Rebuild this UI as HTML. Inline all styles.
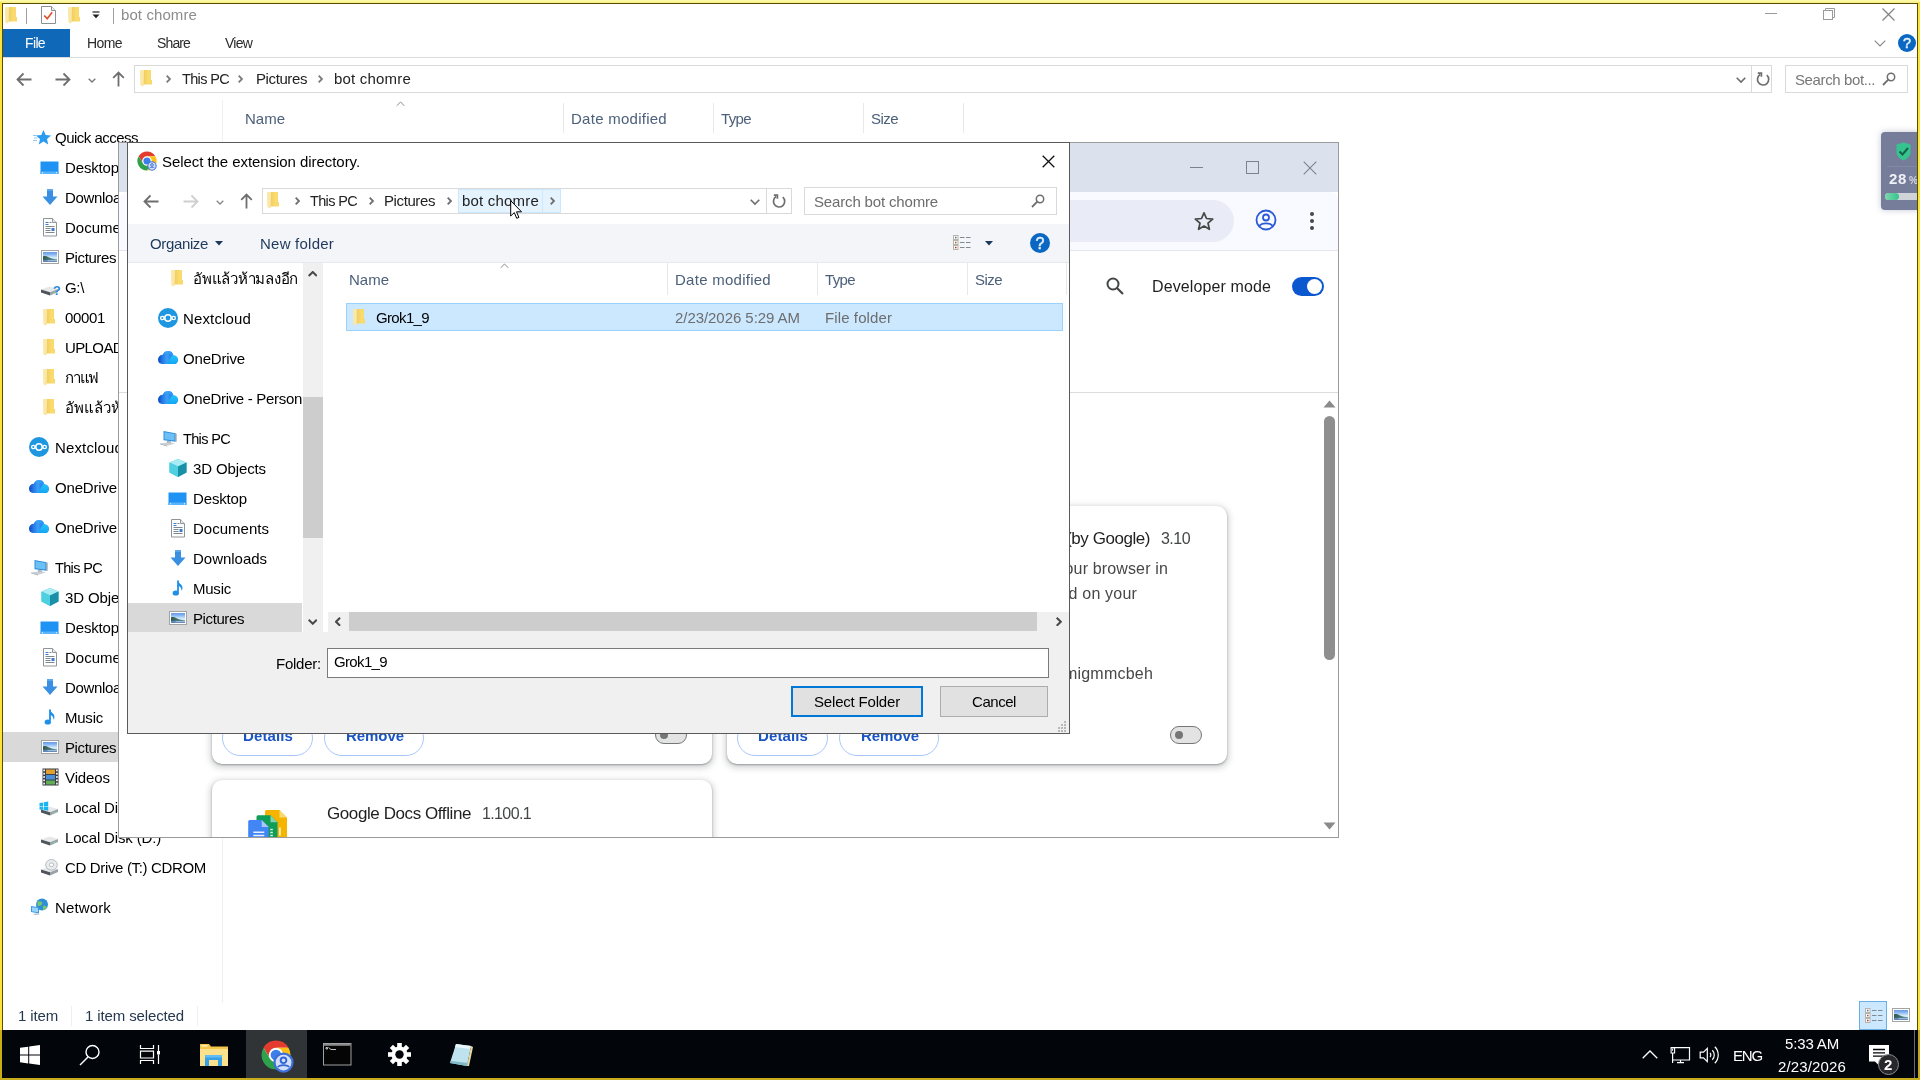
<!DOCTYPE html><html lang="en"><head><meta charset="utf-8"><title>bot chomre</title><style>html,body{margin:0;padding:0}body{width:1920px;height:1080px;position:relative;overflow:hidden;background:#fff;font-family:'Liberation Sans','DejaVu Sans',sans-serif;}.layer{position:absolute;left:0;top:0;width:1920px;height:1080px;overflow:hidden;will-change:transform}.b{position:absolute;display:block}.t{position:absolute;white-space:pre;display:block}</style></head><body><div class="layer" style="background:#fff"><svg class="b" style="left:4.5px;top:7px;" width="12.5" height="17.0" viewBox="0 0 12.500 17"><defs><linearGradient id="fg" x1="0" x2="1"><stop offset="0" stop-color="#efcf62"/><stop offset=".6" stop-color="#fbdb6e"/><stop offset="1" stop-color="#f7d870"/></linearGradient></defs><path d="M3.600 0H11v10h1v4.600H3.600z" fill="url(#fg)"/><path d="M0 .300L3.700 .100V14.500L2.700 16.600 .300 15.300z" fill="#fbe8a6"/><path d="M3.700 .100V14.500L2.700 16.600z" fill="#f3dc92"/></svg><div class="b" style="left:26px;top:8px;width:1px;height:16px;background:#a0a0a0"></div><svg class="b" style="left:41px;top:6px;" width="15" height="18" viewBox="0 0 15 18"><path d="M.5.5h10l4 4v13H.5z" fill="#fff" stroke="#8a8f94"/><path d="M10.500.5v4h4" fill="#f0f0f0" stroke="#8a8f94"/><path d="M3.200 9.500l3 3.200 5-6.500" fill="none" stroke="#e0532f" stroke-width="1.700"/></svg><svg class="b" style="left:68.0px;top:7px;" width="12.5" height="17.0" viewBox="0 0 12.500 17"><defs><linearGradient id="fg" x1="0" x2="1"><stop offset="0" stop-color="#efcf62"/><stop offset=".6" stop-color="#fbdb6e"/><stop offset="1" stop-color="#f7d870"/></linearGradient></defs><path d="M3.600 0H11v10h1v4.600H3.600z" fill="url(#fg)"/><path d="M0 .300L3.700 .100V14.500L2.700 16.600 .300 15.300z" fill="#fbe8a6"/><path d="M3.700 .100V14.500L2.700 16.600z" fill="#f3dc92"/></svg><svg class="b" style="left:92px;top:11px;" width="8" height="8" viewBox="0 0 8 8"><path d="M.5 1h7" stroke="#222" stroke-width="1.200"/><path d="M.5 3.500h7l-3.500 3.700z" fill="#222"/></svg><div class="b" style="left:113px;top:8px;width:1px;height:16px;background:#a0a0a0"></div><span class="t" style="left:121px;top:4.30px;font-size:15px;line-height:21px;color:#8c8c8c;letter-spacing:0.095px;">bot chomre</span><div class="b" style="left:1765px;top:13px;width:12px;height:1px;background:#9a9a9a"></div><svg class="b" style="left:1823px;top:8px;" width="12" height="12" viewBox="0 0 12 12"><path d="M2.500 2.500V.5h9v9h-2" fill="none" stroke="#9a9a9a"/><rect x=".5" y="2.500" width="9" height="9" fill="#fff" stroke="#9a9a9a"/></svg><svg class="b" style="left:1882px;top:7.5px;" width="13" height="13" viewBox="0 0 13 13"><path d="M.5.5l12 12M12.500.5l-12 12" stroke="#858585" stroke-width="1.300"/></svg><div class="b" style="left:3px;top:29px;width:67px;height:28px;background:#1068b8"></div><span class="t" style="left:25px;top:33.15px;font-size:14px;line-height:20px;color:#fff;letter-spacing:-0.641px;">File</span><span class="t" style="left:87px;top:33.15px;font-size:14px;line-height:20px;color:#2b2b2b;letter-spacing:-0.590px;">Home</span><span class="t" style="left:157px;top:33.15px;font-size:14px;line-height:20px;color:#2b2b2b;letter-spacing:-0.872px;">Share</span><span class="t" style="left:225px;top:33.15px;font-size:14px;line-height:20px;color:#2b2b2b;letter-spacing:-0.773px;">View</span><div class="b" style="left:0px;top:57px;width:1920px;height:1px;background:#dadbdc"></div><svg class="b" style="left:1874.0px;top:39.5px;" width="12" height="7.5" viewBox="0 0 12 7.5"><path d="M.7 .7L6.0 6.0L11.3 .7" fill="none" stroke="#8a8a8a" stroke-width="1.2"/></svg><svg class="b" style="left:1898px;top:34px;" width="18" height="18" viewBox="0 0 18 18"><circle cx="9" cy="9" r="9" fill="#0a67c2"/><text x="9" y="14.0" text-anchor="middle" font-family="Liberation Sans" font-size="14.4" fill="#e8f4ff" stroke="#e8f4ff" stroke-width=".5">?</text></svg><svg class="b" style="left:16px;top:71.5px;" width="17" height="15" viewBox="0 0 17 15"><path d="M7.500 1.500L1.500 7.500l6 6M1.500 7.500h14" fill="none" stroke="#6e6e6e" stroke-width="1.800"/></svg><svg class="b" style="left:53.5px;top:71.5px;" width="17" height="15" viewBox="0 0 17 15"><path d="M9.500 1.500l6 6-6 6M15.500 7.500h-14" fill="none" stroke="#6e6e6e" stroke-width="1.800"/></svg><svg class="b" style="left:88.0px;top:77.5px;" width="8" height="5.5" viewBox="0 0 8 5.5"><path d="M.7 .7L4.0 4.0L7.3 .7" fill="none" stroke="#7a7a7a" stroke-width="1.4"/></svg><svg class="b" style="left:111.5px;top:71px;" width="13" height="16" viewBox="0 0 13 16"><path d="M1.200 6.800L6.500 1.500l5.300 5.300M6.500 1.500v14" fill="none" stroke="#6e6e6e" stroke-width="1.800"/></svg><div class="b" style="left:134px;top:65px;width:1638px;height:28px;border:1px solid #d9d9d9;box-sizing:border-box"></div><div class="b" style="left:1751px;top:65px;width:1px;height:28px;background:#d9d9d9"></div><svg class="b" style="left:140.0px;top:70px;" width="12.5" height="17.0" viewBox="0 0 12.500 17"><defs><linearGradient id="fg" x1="0" x2="1"><stop offset="0" stop-color="#efcf62"/><stop offset=".6" stop-color="#fbdb6e"/><stop offset="1" stop-color="#f7d870"/></linearGradient></defs><path d="M3.600 0H11v10h1v4.600H3.600z" fill="url(#fg)"/><path d="M0 .300L3.700 .100V14.500L2.700 16.600 .300 15.300z" fill="#fbe8a6"/><path d="M3.700 .100V14.500L2.700 16.600z" fill="#f3dc92"/></svg><svg class="b" style="left:165.5px;top:75.0px;" width="5.5" height="8" viewBox="0 0 5.5 8"><path d="M.7 .7L4.0 4.0L.7 7.3" fill="none" stroke="#7a7a7a" stroke-width="1.8"/></svg><span class="t" style="left:182px;top:68.98px;font-size:14.5px;line-height:20px;color:#222;letter-spacing:-0.654px;">This PC</span><svg class="b" style="left:237.5px;top:75.0px;" width="5.5" height="8" viewBox="0 0 5.5 8"><path d="M.7 .7L4.0 4.0L.7 7.3" fill="none" stroke="#7a7a7a" stroke-width="1.8"/></svg><span class="t" style="left:256px;top:68.30px;font-size:15px;line-height:21px;color:#222;letter-spacing:-0.398px;">Pictures</span><svg class="b" style="left:317.5px;top:75.0px;" width="5.5" height="8" viewBox="0 0 5.5 8"><path d="M.7 .7L4.0 4.0L.7 7.3" fill="none" stroke="#7a7a7a" stroke-width="1.8"/></svg><span class="t" style="left:334px;top:68.30px;font-size:15px;line-height:21px;color:#222;letter-spacing:0.195px;">bot chomre</span><svg class="b" style="left:1736.0px;top:77.0px;" width="10" height="6.5" viewBox="0 0 10 6.5"><path d="M.7 .7L5.0 5.0L9.3 .7" fill="none" stroke="#6e6e6e" stroke-width="1.6"/></svg><svg class="b" style="left:1756px;top:71.5px;" width="14" height="15" viewBox="0 0 14 15"><path d="M10.800 3.200A5.600 5.600 0 1 1 4.200 2.600" fill="none" stroke="#6e6e6e" stroke-width="1.700"/><path d="M1.800 1.200h3.600v3.600" fill="none" stroke="#6e6e6e" stroke-width="1.700"/></svg><div class="b" style="left:1785px;top:65px;width:123px;height:28px;border:1px solid #d9d9d9;box-sizing:border-box"></div><span class="t" style="left:1795px;top:69.30px;font-size:15px;line-height:21px;color:#777;letter-spacing:-0.389px;">Search bot...</span><svg class="b" style="left:1882px;top:72px;" width="14" height="14" viewBox="0 0 14 14"><circle cx="9" cy="5" r="3.700" fill="none" stroke="#6e6e6e" stroke-width="1.500"/><path d="M6.300 7.700L1 13" stroke="#6e6e6e" stroke-width="1.800"/></svg><svg class="b" style="left:395.5px;top:101.25px;" width="9" height="6.0" viewBox="0 0 9 6.0"><path d="M.7 4.8L4.5 1L8.3 4.8" fill="none" stroke="#8a8a8a" stroke-width="1"/></svg><span class="t" style="left:245px;top:108.30px;font-size:15px;line-height:21px;color:#4c607a;">Name</span><span class="t" style="left:571px;top:108.30px;font-size:15px;line-height:21px;color:#4c607a;letter-spacing:0.264px;">Date modified</span><span class="t" style="left:721px;top:108.30px;font-size:15px;line-height:21px;color:#4c607a;letter-spacing:-0.633px;">Type</span><span class="t" style="left:871px;top:108.30px;font-size:15px;line-height:21px;color:#4c607a;letter-spacing:-0.547px;">Size</span><div class="b" style="left:563px;top:103px;width:1px;height:30px;background:#e8e8e8"></div><div class="b" style="left:713px;top:103px;width:1px;height:30px;background:#e8e8e8"></div><div class="b" style="left:863px;top:103px;width:1px;height:30px;background:#e8e8e8"></div><div class="b" style="left:963px;top:103px;width:1px;height:30px;background:#e8e8e8"></div><div class="b" style="left:222px;top:100px;width:1px;height:903px;background:#f0f0f0"></div><svg class="b" style="left:33px;top:130px;" width="18" height="15" viewBox="0 0 18 15"><path d="M10.500 0l2.200 5 5.300.5-4 3.600 1.200 5.300-4.700-2.800-4.700 2.800L7 9.100 3 5.500 8.300 5z" fill="#2b9bf0"/><path d="M0 5.500h4M1 8h3.500M0 10.500h4" stroke="#8cc8f7" stroke-width="1"/></svg><span class="t" style="left:55px;top:127.30px;font-size:15px;line-height:21px;color:#000;letter-spacing:-0.517px;">Quick access</span><svg class="b" style="left:40px;top:161px;" width="19" height="14" viewBox="0 0 19 14"><rect x="0.5" y="0.5" width="18" height="12.5" fill="#1f93f3"/><rect x="0.5" y="10.5" width="18" height="2.5" fill="#58b4fb"/><rect x="2" y="11.3" width="1" height="1" fill="#fff"/><rect x="16" y="11.3" width="1" height="1" fill="#fff"/></svg><span class="t" style="left:65px;top:157.30px;font-size:15px;line-height:21px;color:#000;letter-spacing:-0.147px;">Desktop</span><svg class="b" style="left:42px;top:189px;" width="16" height="16" viewBox="0 0 16 16"><path d="M5 0h6v7.5h4.5L8 16 .5 7.5H5z" fill="#3b8fe3"/><path d="M5 0h6v2H5z" fill="#5aa7ee"/></svg><span class="t" style="left:65px;top:187.30px;font-size:15px;line-height:21px;color:#000;letter-spacing:-0.358px;">Downloads</span><svg class="b" style="left:43px;top:218px;" width="14" height="19" viewBox="0 0 14 19"><path d="M.5.5h9l4 4v13.5H.5z" fill="#fff" stroke="#8f9499"/><path d="M9.5.5v4h4" fill="#e8eaec" stroke="#8f9499"/><path d="M2.5 4.5h3M2.5 6.5h3" stroke="#3a7bd0"/><path d="M6.5 4.5h2" stroke="#7d8790"/><path d="M2.5 8.5h9M2.5 10.5h5M2.5 12.5h5M2.5 14.5h9" stroke="#7d8790"/><rect x="8.5" y="10" width="3" height="3" fill="#3a7bd0"/></svg><span class="t" style="left:65px;top:217.30px;font-size:15px;line-height:21px;color:#000;letter-spacing:0.014px;">Documents</span><svg class="b" style="left:41px;top:250px;" width="18" height="14" viewBox="0 0 18 14"><defs><linearGradient id="psk" x1="0" x2="0" y1="0" y2="1"><stop offset="0" stop-color="#6a9ae0"/><stop offset=".2" stop-color="#7fb0f2"/><stop offset=".55" stop-color="#d2e9f8"/><stop offset="1" stop-color="#cfe6f5"/></linearGradient><linearGradient id="phl" x1="0" x2="1" y1="0" y2="0"><stop offset="0" stop-color="#2f5a4c"/><stop offset=".5" stop-color="#47776e"/><stop offset="1" stop-color="#6f9aa0"/></linearGradient></defs><rect x=".5" y=".5" width="17" height="13" fill="#fff" stroke="#a3a3a3"/><rect x="2" y="2" width="14" height="10" fill="url(#psk)"/><path d="M2 6.300c2-.6 3.500-.6 5 .6 2 1.500 5 1.400 9 2.600V10.500H2z" fill="url(#phl)"/><path d="M2 9.800h14V12H2z" fill="#5f86b8"/><path d="M6.500 10.300h9.500v.8H6.500z" fill="#cfe2f2" opacity=".8"/></svg><span class="t" style="left:65px;top:247.30px;font-size:15px;line-height:21px;color:#000;letter-spacing:-0.398px;">Pictures</span><svg class="b" style="left:40px;top:284px;overflow:visible;" width="19" height="12" viewBox="0 0 19 12"><path d="M1 5.500L9.500 2.500 18 5 10 8.300z" fill="#e6e8ea"/><path d="M1 5.500L10 8.300V11.500L1 8.500z" fill="#4f555b"/><path d="M10 8.300L18 5V8L10 11.500z" fill="#9aa1a8"/><path d="M12.500 8.900l3-1.200v.9l-3 1.200z" fill="#6fe08a"/></svg><span class="t" style="left:53px;top:281.50px;font-size:13px;line-height:18px;color:#2b8ae0;font-weight:700;">?</span><span class="t" style="left:65px;top:277.30px;font-size:15px;line-height:21px;color:#000;letter-spacing:-0.339px;">G:\</span><svg class="b" style="left:43.0px;top:309px;" width="12.5" height="17.0" viewBox="0 0 12.500 17"><defs><linearGradient id="fg" x1="0" x2="1"><stop offset="0" stop-color="#efcf62"/><stop offset=".6" stop-color="#fbdb6e"/><stop offset="1" stop-color="#f7d870"/></linearGradient></defs><path d="M3.600 0H11v10h1v4.600H3.600z" fill="url(#fg)"/><path d="M0 .300L3.700 .100V14.500L2.700 16.600 .300 15.300z" fill="#fbe8a6"/><path d="M3.700 .100V14.500L2.700 16.600z" fill="#f3dc92"/></svg><span class="t" style="left:65px;top:307.30px;font-size:15px;line-height:21px;color:#000;letter-spacing:-0.344px;">00001</span><svg class="b" style="left:43.0px;top:339px;" width="12.5" height="17.0" viewBox="0 0 12.500 17"><defs><linearGradient id="fg" x1="0" x2="1"><stop offset="0" stop-color="#efcf62"/><stop offset=".6" stop-color="#fbdb6e"/><stop offset="1" stop-color="#f7d870"/></linearGradient></defs><path d="M3.600 0H11v10h1v4.600H3.600z" fill="url(#fg)"/><path d="M0 .300L3.700 .100V14.500L2.700 16.600 .300 15.300z" fill="#fbe8a6"/><path d="M3.700 .100V14.500L2.700 16.600z" fill="#f3dc92"/></svg><span class="t" style="left:65px;top:337.30px;font-size:15px;line-height:21px;color:#000;letter-spacing:-0.615px;">UPLOAD</span><svg class="b" style="left:43.0px;top:369px;" width="12.5" height="17.0" viewBox="0 0 12.500 17"><defs><linearGradient id="fg" x1="0" x2="1"><stop offset="0" stop-color="#efcf62"/><stop offset=".6" stop-color="#fbdb6e"/><stop offset="1" stop-color="#f7d870"/></linearGradient></defs><path d="M3.600 0H11v10h1v4.600H3.600z" fill="url(#fg)"/><path d="M0 .300L3.700 .100V14.500L2.700 16.600 .300 15.300z" fill="#fbe8a6"/><path d="M3.700 .100V14.500L2.700 16.600z" fill="#f3dc92"/></svg><span class="t" style="left:65px;top:367.30px;font-size:15px;line-height:21px;color:#000;letter-spacing:-1.200px;">กาแฟ</span><svg class="b" style="left:43.0px;top:399px;" width="12.5" height="17.0" viewBox="0 0 12.500 17"><defs><linearGradient id="fg" x1="0" x2="1"><stop offset="0" stop-color="#efcf62"/><stop offset=".6" stop-color="#fbdb6e"/><stop offset="1" stop-color="#f7d870"/></linearGradient></defs><path d="M3.600 0H11v10h1v4.600H3.600z" fill="url(#fg)"/><path d="M0 .300L3.700 .100V14.500L2.700 16.600 .300 15.300z" fill="#fbe8a6"/><path d="M3.700 .100V14.500L2.700 16.600z" fill="#f3dc92"/></svg><span class="t" style="left:65px;top:397.30px;font-size:15px;line-height:21px;color:#000;">อัพแล้วห้ามลงอีก</span><svg class="b" style="left:29px;top:437px;" width="20" height="20" viewBox="0 0 20 20"><circle cx="10" cy="10" r="10" fill="#1e96e0"/><circle cx="10" cy="10" r="3.200" fill="none" stroke="#fff" stroke-width="1.500"/><circle cx="4.300" cy="10" r="1.700" fill="none" stroke="#fff" stroke-width="1.300"/><circle cx="15.700" cy="10" r="1.700" fill="none" stroke="#fff" stroke-width="1.300"/></svg><span class="t" style="left:55px;top:437.30px;font-size:15px;line-height:21px;color:#000;letter-spacing:0.144px;">Nextcloud</span><svg class="b" style="left:28.5px;top:480px;" width="20" height="13.2" viewBox="0 0 20 13.200"><defs><clipPath id="odc"><circle cx="4.600" cy="8.400" r="4.600"/><circle cx="10" cy="5.500" r="5.500"/><circle cx="15.600" cy="8.800" r="4.400"/><rect x="4" y="8" width="11.600" height="5.200"/></clipPath><linearGradient id="odg" x1="0" x2="1" y1="0" y2="0"><stop offset="0" stop-color="#0a47be"/><stop offset=".22" stop-color="#2478e6"/><stop offset=".45" stop-color="#3d9ff6"/><stop offset=".7" stop-color="#1f7de8"/></linearGradient><linearGradient id="odh" x1="0" x2="0" y1="0" y2="1"><stop offset="0" stop-color="#25c8fc"/><stop offset="1" stop-color="#14a4f2"/></linearGradient></defs><g clip-path="url(#odc)"><rect width="20" height="13.200" fill="url(#odg)"/><path d="M14.600 3.500L20 3.500V13.200H8.600z" fill="url(#odh)"/><path d="M5.200 0H16V5.500L13.700 5A6 6 0 0 0 5.200 3.500z" fill="#38a8f8" opacity=".55"/></g></svg><span class="t" style="left:55px;top:477.30px;font-size:15px;line-height:21px;color:#000;letter-spacing:-0.170px;">OneDrive</span><svg class="b" style="left:28.5px;top:520px;" width="20" height="13.2" viewBox="0 0 20 13.200"><defs><clipPath id="odc"><circle cx="4.600" cy="8.400" r="4.600"/><circle cx="10" cy="5.500" r="5.500"/><circle cx="15.600" cy="8.800" r="4.400"/><rect x="4" y="8" width="11.600" height="5.200"/></clipPath><linearGradient id="odg" x1="0" x2="1" y1="0" y2="0"><stop offset="0" stop-color="#0a47be"/><stop offset=".22" stop-color="#2478e6"/><stop offset=".45" stop-color="#3d9ff6"/><stop offset=".7" stop-color="#1f7de8"/></linearGradient><linearGradient id="odh" x1="0" x2="0" y1="0" y2="1"><stop offset="0" stop-color="#25c8fc"/><stop offset="1" stop-color="#14a4f2"/></linearGradient></defs><g clip-path="url(#odc)"><rect width="20" height="13.200" fill="url(#odg)"/><path d="M14.600 3.500L20 3.500V13.200H8.600z" fill="url(#odh)"/><path d="M5.200 0H16V5.500L13.700 5A6 6 0 0 0 5.200 3.500z" fill="#38a8f8" opacity=".55"/></g></svg><span class="t" style="left:55px;top:517.30px;font-size:15px;line-height:21px;color:#000;letter-spacing:-0.170px;">OneDrive</span><svg class="b" style="left:30px;top:559px;" width="19" height="17" viewBox="0 0 19 17"><path d="M4.500 1l12 2.200v8.600l-12-1.600z" fill="#2e8fdc"/><path d="M5.500 2.200l10 1.800v6.600l-10-1.300z" fill="#6cc0f5"/><path d="M16.500 3.200l1 .6v8l-1 0z" fill="#7d8a96"/><path d="M8 11l4 .6v2l-4-.4z" fill="#9aa4ad"/><path d="M1 13.500l9-1.200 6 1.200-8 2.200z" fill="#c9ced3"/><path d="M1 13.500l7 2.200v.8l-7-2.200z" fill="#9aa4ad"/></svg><span class="t" style="left:55px;top:557.98px;font-size:14.5px;line-height:20px;color:#000;letter-spacing:-0.654px;">This PC</span><div class="b" style="left:3px;top:732px;width:219px;height:30px;background:#d9d9d9"></div><svg class="b" style="left:41px;top:588px;" width="18" height="18" viewBox="0 0 18 18"><path d="M9 0l8.500 3.500v10L9 18 .5 13.500v-10z" fill="#3cc4d8"/><path d="M9 0l8.500 3.500L9 7.500.5 3.500z" fill="#a8ecf3"/><path d="M9 7.500l8.500-4v10L9 18z" fill="#1a8fa8"/><path d="M.5 3.500l8.500 4V18L.5 13.500z" fill="#4fd0e0"/></svg><span class="t" style="left:65px;top:587.30px;font-size:15px;line-height:21px;color:#000;letter-spacing:-0.120px;">3D Objects</span><svg class="b" style="left:40px;top:621px;" width="19" height="14" viewBox="0 0 19 14"><rect x="0.5" y="0.5" width="18" height="12.5" fill="#1f93f3"/><rect x="0.5" y="10.5" width="18" height="2.5" fill="#58b4fb"/><rect x="2" y="11.3" width="1" height="1" fill="#fff"/><rect x="16" y="11.3" width="1" height="1" fill="#fff"/></svg><span class="t" style="left:65px;top:617.30px;font-size:15px;line-height:21px;color:#000;letter-spacing:-0.147px;">Desktop</span><svg class="b" style="left:43px;top:648px;" width="14" height="19" viewBox="0 0 14 19"><path d="M.5.5h9l4 4v13.5H.5z" fill="#fff" stroke="#8f9499"/><path d="M9.5.5v4h4" fill="#e8eaec" stroke="#8f9499"/><path d="M2.5 4.5h3M2.5 6.5h3" stroke="#3a7bd0"/><path d="M6.5 4.5h2" stroke="#7d8790"/><path d="M2.5 8.5h9M2.5 10.5h5M2.5 12.5h5M2.5 14.5h9" stroke="#7d8790"/><rect x="8.5" y="10" width="3" height="3" fill="#3a7bd0"/></svg><span class="t" style="left:65px;top:647.30px;font-size:15px;line-height:21px;color:#000;letter-spacing:0.014px;">Documents</span><svg class="b" style="left:42px;top:679px;" width="16" height="16" viewBox="0 0 16 16"><path d="M5 0h6v7.5h4.5L8 16 .5 7.5H5z" fill="#3b8fe3"/><path d="M5 0h6v2H5z" fill="#5aa7ee"/></svg><span class="t" style="left:65px;top:677.30px;font-size:15px;line-height:21px;color:#000;letter-spacing:-0.358px;">Downloads</span><svg class="b" style="left:44px;top:709px;" width="12" height="16" viewBox="0 0 12 16"><path d="M6 .5v11.2" stroke="#1e90e8" stroke-width="1.8" fill="none"/><ellipse cx="3.8" cy="13" rx="3.2" ry="2.6" fill="#1e90e8"/><path d="M6 .5c.5 3 4.500 3.500 4.500 7.500 0 1.200-.5 2-1 2.800.2-3-1.800-4.500-3.500-5z" fill="#1e90e8"/></svg><span class="t" style="left:65px;top:707.30px;font-size:15px;line-height:21px;color:#000;letter-spacing:-0.234px;">Music</span><svg class="b" style="left:41px;top:740px;" width="18" height="14" viewBox="0 0 18 14"><defs><linearGradient id="psk" x1="0" x2="0" y1="0" y2="1"><stop offset="0" stop-color="#6a9ae0"/><stop offset=".2" stop-color="#7fb0f2"/><stop offset=".55" stop-color="#d2e9f8"/><stop offset="1" stop-color="#cfe6f5"/></linearGradient><linearGradient id="phl" x1="0" x2="1" y1="0" y2="0"><stop offset="0" stop-color="#2f5a4c"/><stop offset=".5" stop-color="#47776e"/><stop offset="1" stop-color="#6f9aa0"/></linearGradient></defs><rect x=".5" y=".5" width="17" height="13" fill="#fff" stroke="#a3a3a3"/><rect x="2" y="2" width="14" height="10" fill="url(#psk)"/><path d="M2 6.300c2-.6 3.500-.6 5 .6 2 1.500 5 1.400 9 2.600V10.500H2z" fill="url(#phl)"/><path d="M2 9.800h14V12H2z" fill="#5f86b8"/><path d="M6.500 10.300h9.500v.8H6.500z" fill="#cfe2f2" opacity=".8"/></svg><span class="t" style="left:65px;top:737.30px;font-size:15px;line-height:21px;color:#000;letter-spacing:-0.398px;">Pictures</span><svg class="b" style="left:42px;top:768px;" width="17" height="18" viewBox="0 0 17 18"><rect x=".5" y=".5" width="16" height="17" fill="#3b3f45"/><rect x="4" y="1.500" width="9" height="4.500" fill="#e0a030"/><rect x="4" y="7" width="9" height="4.500" fill="#4a90d9"/><rect x="4" y="12.500" width="9" height="4" fill="#5fae57"/><rect x="1.300" y="1.5" width="1.600" height="1.800" fill="#fff"/><rect x="14.100" y="1.5" width="1.600" height="1.800" fill="#fff"/><rect x="1.300" y="4.8" width="1.600" height="1.800" fill="#fff"/><rect x="14.100" y="4.8" width="1.600" height="1.800" fill="#fff"/><rect x="1.300" y="8.1" width="1.600" height="1.800" fill="#fff"/><rect x="14.100" y="8.1" width="1.600" height="1.800" fill="#fff"/><rect x="1.300" y="11.4" width="1.600" height="1.800" fill="#fff"/><rect x="14.100" y="11.4" width="1.600" height="1.800" fill="#fff"/><rect x="1.300" y="14.7" width="1.600" height="1.800" fill="#fff"/><rect x="14.100" y="14.7" width="1.600" height="1.800" fill="#fff"/></svg><span class="t" style="left:65px;top:767.30px;font-size:15px;line-height:21px;color:#000;letter-spacing:-0.099px;">Videos</span><svg class="b" style="left:40px;top:804px;overflow:visible;" width="19" height="12" viewBox="0 0 19 12"><path d="M1 5.500L9.500 2.500 18 5 10 8.300z" fill="#e6e8ea"/><path d="M1 5.500L10 8.300V11.500L1 8.500z" fill="#4f555b"/><path d="M10 8.300L18 5V8L10 11.500z" fill="#9aa1a8"/><path d="M12.500 8.900l3-1.200v.9l-3 1.200z" fill="#6fe08a"/><path d="M-.5 -4.500l3.800-.6v3.500H-.5zM4 -5.200l4.200-.7v4.300H4zM-.5 -.9h3.800v3.400l-3.800-.6zM4 -.9h4.200v4.100L4 2.600z" fill="#19b5f0" transform="translate(0 3.500)"/></svg><span class="t" style="left:65px;top:797.30px;font-size:15px;line-height:21px;color:#000;letter-spacing:-0.157px;">Local Disk (C:)</span><svg class="b" style="left:40px;top:834px;overflow:visible;" width="19" height="12" viewBox="0 0 19 12"><path d="M1 5.500L9.500 2.500 18 5 10 8.300z" fill="#e6e8ea"/><path d="M1 5.500L10 8.300V11.500L1 8.500z" fill="#4f555b"/><path d="M10 8.300L18 5V8L10 11.500z" fill="#9aa1a8"/><path d="M12.500 8.900l3-1.200v.9l-3 1.200z" fill="#6fe08a"/></svg><span class="t" style="left:65px;top:827.30px;font-size:15px;line-height:21px;color:#000;letter-spacing:-0.157px;">Local Disk (D:)</span><svg class="b" style="left:40px;top:859px;" width="19" height="17" viewBox="0 0 19 17"><path d="M1 10.500L9.500 7.500 18 10 10 13.300z" fill="#e6e8ea"/><path d="M1 10.500L10 13.300V16.500L1 13.500z" fill="#4f555b"/><path d="M10 13.300L18 10V13L10 16.500z" fill="#9aa1a8"/><ellipse cx="11.500" cy="5.800" rx="5.800" ry="5.300" fill="#e9ebed" stroke="#a8adb3" stroke-width=".8"/><ellipse cx="11.500" cy="5.800" rx="2.100" ry="1.900" fill="#fff" stroke="#a8adb3" stroke-width=".8"/></svg><span class="t" style="left:65px;top:857.30px;font-size:15px;line-height:21px;color:#000;letter-spacing:-0.342px;">CD Drive (T:) CDROM</span><svg class="b" style="left:30px;top:898px;" width="19" height="18" viewBox="0 0 19 18"><circle cx="12" cy="6.500" r="6" fill="#2c8fd8"/><path d="M8 3c2 1 3 0 4 1.500s-1 3-3 3.500-2-3-1-5zM13 8c1.500-.5 3 0 4 1-1 2-2.500 3-4 3z" fill="#7cc66a"/><path d="M1 8l8 1.200v6.300L1 14z" fill="#3a9be6"/><path d="M2 9.200l6 .9v4.200l-6-1z" fill="#9bd4fa"/><path d="M3 16l5-.6 2 .8-5 .8z" fill="#aab3bb"/></svg><span class="t" style="left:55px;top:897.30px;font-size:15px;line-height:21px;color:#000;letter-spacing:0.141px;">Network</span><span class="t" style="left:18px;top:1005.30px;font-size:15px;line-height:21px;color:#263850;letter-spacing:-0.143px;">1 item</span><span class="t" style="left:85px;top:1005.30px;font-size:15px;line-height:21px;color:#263850;letter-spacing:-0.126px;">1 item selected</span><div class="b" style="left:71px;top:1006px;width:1px;height:20px;background:#f0f0f0"></div><div class="b" style="left:197px;top:1006px;width:1px;height:20px;background:#f0f0f0"></div><div class="b" style="left:1859px;top:1001px;width:28px;height:29px;background:#cce8ff;border:1px solid #66b0e6;box-sizing:border-box"></div><svg class="b" style="left:1865px;top:1008px;" width="18" height="16" viewBox="0 0 18 16"><rect x=".5" y="0.5" width="4.500" height="4" fill="#fff" stroke="#b8b2a8"/><rect x="2" y="1.8" width="1.500" height="1.500" fill="#4a6a9a"/><path d="M7 2.5h4.500M13 2.5h4.500" stroke="#7f8a93"/><rect x=".5" y="5.5" width="4.500" height="4" fill="#fff" stroke="#b8b2a8"/><rect x="2" y="6.8" width="1.500" height="1.500" fill="#8a5a5a"/><path d="M7 7.5h4.500M13 7.5h4.500" stroke="#7f8a93"/><rect x=".5" y="10.5" width="4.500" height="4" fill="#fff" stroke="#b8b2a8"/><rect x="2" y="11.8" width="1.500" height="1.500" fill="#b03030"/><path d="M7 12.5h4.500M13 12.5h4.500" stroke="#7f8a93"/></svg><svg class="b" style="left:1892px;top:1008px;" width="18" height="14" viewBox="0 0 18 14"><defs><linearGradient id="psk" x1="0" x2="0" y1="0" y2="1"><stop offset="0" stop-color="#6a9ae0"/><stop offset=".2" stop-color="#7fb0f2"/><stop offset=".55" stop-color="#d2e9f8"/><stop offset="1" stop-color="#cfe6f5"/></linearGradient><linearGradient id="phl" x1="0" x2="1" y1="0" y2="0"><stop offset="0" stop-color="#2f5a4c"/><stop offset=".5" stop-color="#47776e"/><stop offset="1" stop-color="#6f9aa0"/></linearGradient></defs><rect x=".5" y=".5" width="17" height="13" fill="#fff" stroke="#a3a3a3"/><rect x="2" y="2" width="14" height="10" fill="url(#psk)"/><path d="M2 6.300c2-.6 3.500-.6 5 .6 2 1.500 5 1.400 9 2.600V10.500H2z" fill="url(#phl)"/><path d="M2 9.800h14V12H2z" fill="#5f86b8"/><path d="M6.500 10.300h9.500v.8H6.500z" fill="#cfe2f2" opacity=".8"/></svg></div><div class="layer" style="clip-path:inset(142px 581px 242px 118px)"><div class="b" style="left:118px;top:142px;width:1221px;height:696px;background:#fff"></div><div class="b" style="left:118px;top:142px;width:1221px;height:50px;background:#dce1ee"></div><div class="b" style="left:118px;top:192px;width:1221px;height:58px;background:#f9faff;border-radius:10px 10px 0 0"></div><div class="b" style="left:118px;top:250px;width:1221px;height:1px;background:#e3e5ea"></div><div class="b" style="left:1190px;top:167px;width:13px;height:1px;background:#7f8288"></div><div class="b" style="left:1246px;top:161px;width:13px;height:13px;border:1px solid #7f8288;box-sizing:border-box"></div><svg class="b" style="left:1303px;top:161px;" width="14" height="14" viewBox="0 0 14 14"><path d="M.700.700l12.600 12.600M13.300.700L.700 13.300" stroke="#7f8288" stroke-width="1.100"/></svg><div class="b" style="left:300px;top:200px;width:934px;height:42px;background:#e9ebf6;border-radius:21px"></div><svg class="b" style="left:1194px;top:211px;" width="20" height="20" viewBox="0 0 20 20"><path d="M10 1.800l2.500 5.700 6.200.6-4.700 4.100 1.400 6.100L10 15.100l-5.400 3.200 1.400-6.100L1.300 8.100l6.200-.6z" fill="none" stroke="#444746" stroke-width="1.700" stroke-linejoin="round"/></svg><svg class="b" style="left:1255px;top:209px;" width="22" height="22" viewBox="0 0 22 22"><circle cx="11" cy="11" r="9.500" fill="none" stroke="#2a5bd7" stroke-width="1.800"/><circle cx="11" cy="8.500" r="3" fill="none" stroke="#2a5bd7" stroke-width="1.800"/><path d="M4.500 17c2-3.400 11-3.400 13 0" fill="none" stroke="#2a5bd7" stroke-width="1.800"/></svg><svg class="b" style="left:1308.8px;top:210.5px;" width="6" height="20" viewBox="0 0 6 20"><circle cx="3" cy="3" r="2" fill="#444746"/><circle cx="3" cy="10" r="2" fill="#444746"/><circle cx="3" cy="17" r="2" fill="#444746"/></svg><svg class="b" style="left:1104.5px;top:276px;" width="20" height="20" viewBox="0 0 20 20"><circle cx="8" cy="8" r="5.500" fill="none" stroke="#444746" stroke-width="2"/><path d="M12 12l6 6" stroke="#444746" stroke-width="2.200"/></svg><span class="t" style="left:1152px;top:276.46px;font-size:16px;line-height:22px;color:#1f1f1f;letter-spacing:0.114px;">Developer mode</span><div class="b" style="left:1292px;top:277px;width:32px;height:19px;background:#0b57d0;border-radius:9.500px"></div><div class="b" style="left:1307px;top:279px;width:15px;height:15px;background:#fff;border-radius:7.500px"></div><div class="b" style="left:118px;top:392px;width:1221px;height:1px;background:#dcdcdc"></div><div class="b" style="left:212px;top:506px;width:500px;height:258px;background:#fff;border-radius:10px;box-shadow:0 1px 2px rgba(60,64,67,.42),0 2px 6px 2px rgba(60,64,67,.22)"></div><div class="b" style="left:727px;top:506px;width:500px;height:258px;background:#fff;border-radius:10px;box-shadow:0 1px 2px rgba(60,64,67,.42),0 2px 6px 2px rgba(60,64,67,.22)"></div><div class="b" style="left:212px;top:780px;width:500px;height:258px;background:#fff;border-radius:10px;box-shadow:0 1px 2px rgba(60,64,67,.42),0 2px 6px 2px rgba(60,64,67,.22)"></div><div class="b" style="left:222px;top:720px;width:91px;height:36px;border:1px solid #a8c7fa;border-radius:18px;box-sizing:border-box;background:#fff"></div><span class="t" style="left:243px;top:725.30px;font-size:15px;line-height:21px;color:#1b55c4;font-weight:700;letter-spacing:0.114px;">Details</span><div class="b" style="left:324px;top:720px;width:100px;height:36px;border:1px solid #a8c7fa;border-radius:18px;box-sizing:border-box;background:#fff"></div><span class="t" style="left:346px;top:725.30px;font-size:15px;line-height:21px;color:#1b55c4;font-weight:700;letter-spacing:-0.060px;">Remove</span><div class="b" style="left:737px;top:720px;width:91px;height:36px;border:1px solid #a8c7fa;border-radius:18px;box-sizing:border-box;background:#fff"></div><span class="t" style="left:758px;top:725.30px;font-size:15px;line-height:21px;color:#1b55c4;font-weight:700;letter-spacing:0.114px;">Details</span><div class="b" style="left:839px;top:720px;width:100px;height:36px;border:1px solid #a8c7fa;border-radius:18px;box-sizing:border-box;background:#fff"></div><span class="t" style="left:861px;top:725.30px;font-size:15px;line-height:21px;color:#1b55c4;font-weight:700;letter-spacing:-0.060px;">Remove</span><div class="b" style="left:655px;top:726px;width:32px;height:18px;background:#e3e3e3;border:1px solid #747775;border-radius:9px;box-sizing:border-box"></div><div class="b" style="left:660px;top:731px;width:8px;height:8px;background:#747775;border-radius:4px"></div><div class="b" style="left:1170px;top:726px;width:32px;height:18px;background:#e3e3e3;border:1px solid #747775;border-radius:9px;box-sizing:border-box"></div><div class="b" style="left:1175px;top:731px;width:8px;height:8px;background:#747775;border-radius:4px"></div><span class="t" style="left:842px;top:527.11px;font-size:17px;line-height:24px;color:#1f1f1f;letter-spacing:-0.451px;">Application Launcher For Drive (by Google)</span><span class="t" style="left:1161px;top:528.46px;font-size:16px;line-height:22px;color:#444746;letter-spacing:-0.535px;">3.10</span><span class="t" style="left:842px;top:558.46px;font-size:16px;line-height:22px;color:#474747;letter-spacing:0.147px;">Open Drive files directly from your browser in</span><span class="t" style="left:842px;top:583.46px;font-size:16px;line-height:22px;color:#474747;letter-spacing:0.188px;">compatible applications installed on your</span><span class="t" style="left:842px;top:608.46px;font-size:16px;line-height:22px;color:#474747;letter-spacing:0.193px;">computer.</span><span class="t" style="left:842px;top:663.46px;font-size:16px;line-height:22px;color:#474747;letter-spacing:0.218px;">ID: lmjegmlicamnimmfhcmpkclmigmmcbeh</span><span class="t" style="left:327px;top:802.11px;font-size:17px;line-height:24px;color:#1f1f1f;letter-spacing:-0.412px;">Google Docs Offline</span><span class="t" style="left:482px;top:803.46px;font-size:16px;line-height:22px;color:#444746;letter-spacing:-0.627px;">1.100.1</span><svg class="b" style="left:248px;top:808px;" width="40" height="30" viewBox="0 0 40 30"><path d="M18.500 2h13l7.500 7.500V30H17V3.500a1.500 1.500 0 0 1 1.500-1.500z" fill="#f4b400"/><path d="M31.500 2v7.500H39z" fill="#f9d977"/><path d="M10 7.300h12.500l7 7V30H8.500V8.800a1.500 1.500 0 0 1 1.500-1.500z" fill="#0f9d58"/><path d="M22.500 7.300v7h7z" fill="#86d2ab"/><path d="M1.700 12h12l7 7v11H.2V13.500a1.500 1.500 0 0 1 1.500-1.500z" fill="#4285f4"/><path d="M13.700 12v7h7z" fill="#a9c7fb"/><path d="M5.300 24.300h11M5.300 27.500h11" stroke="#e6f0ff" stroke-width="1.600"/><path d="M22.300 21.500h2.500M22.300 24.500h2.500M22.300 27.500h2.500" stroke="#d9f3e5" stroke-width="1.400"/><path d="M31 19.500h1.800v8H31z" fill="#fdf0c0"/></svg><div class="b" style="left:1321px;top:393px;width:17px;height:444px;background:#fff"></div><svg class="b" style="left:1323px;top:400px;" width="13" height="8" viewBox="0 0 13 8"><path d="M6.500 .5L12.500 7.500H.5z" fill="#8a8a8a"/></svg><svg class="b" style="left:1323px;top:822px;" width="13" height="8" viewBox="0 0 13 8"><path d="M6.500 7.500L12.500 .5H.5z" fill="#8a8a8a"/></svg><div class="b" style="left:1324px;top:416px;width:11px;height:244px;background:#8f8f8f;border-radius:5.500px"></div><div class="b" style="left:118px;top:142px;width:1221px;height:696px;border:1px solid #9b9b9b;box-sizing:border-box"></div></div><div class="layer" style="clip-path:inset(142px 850px 346px 127px)"><div class="b" style="left:127px;top:142px;width:943px;height:592px;background:#fff"></div><svg class="b" style="left:137px;top:151px;overflow:visible;" width="20" height="20" viewBox="0 0 24 24"><circle cx="12" cy="12" r="11" fill="#fff"/><path d="M2.040 6.250A11.500 11.500 0 0 1 21.960 6.250H12a5.750 5.750 0 0 0-4.980 8.625z" fill="#e33b2e"/><path d="M2.040 6.250A11.500 11.500 0 0 1 21.960 6.250H12a5.750 5.750 0 0 0-4.980 8.625z" fill="#fbc116" transform="rotate(120 12 12)"/><path d="M2.040 6.250A11.500 11.500 0 0 1 21.960 6.250H12a5.750 5.750 0 0 0-4.980 8.625z" fill="#2ea14c" transform="rotate(240 12 12)"/><circle cx="12" cy="12" r="5.300" fill="#fff"/><circle cx="12" cy="12" r="4.300" fill="#3d7fe8"/><g transform="translate(18 18) scale(0.833)"><circle cx="0" cy="0" r="6" fill="#d3e0fa" stroke="#3f6fd8" stroke-width="1.500"/><circle cx="0" cy="-1.500" r="1.900" fill="none" stroke="#3466d6" stroke-width="1.300"/><path d="M-3.700 3.100c1-1.800 6.400-1.800 7.400 0" fill="none" stroke="#3466d6" stroke-width="1.300"/></g></svg><span class="t" style="left:162px;top:151.30px;font-size:15px;line-height:21px;color:#000;letter-spacing:-0.059px;">Select the extension directory.</span><svg class="b" style="left:1042px;top:155px;" width="13" height="13" viewBox="0 0 13 13"><path d="M.700.700l11.600 11.600M12.300.700L.700 12.300" stroke="#111" stroke-width="1.300"/></svg><svg class="b" style="left:143px;top:193.5px;" width="17" height="15" viewBox="0 0 17 15"><path d="M7.500 1.500L1.500 7.500l6 6M1.500 7.500h14" fill="none" stroke="#6e6e6e" stroke-width="1.800"/></svg><svg class="b" style="left:181.5px;top:193.5px;" width="17" height="15" viewBox="0 0 17 15"><path d="M9.500 1.500l6 6-6 6M15.500 7.500h-14" fill="none" stroke="#cfcfcf" stroke-width="1.800"/></svg><svg class="b" style="left:216.0px;top:199.5px;" width="8" height="5.5" viewBox="0 0 8 5.5"><path d="M.7 .7L4.0 4.0L7.3 .7" fill="none" stroke="#8a8a8a" stroke-width="1.4"/></svg><svg class="b" style="left:239.5px;top:193px;" width="13" height="16" viewBox="0 0 13 16"><path d="M1.200 6.800L6.500 1.500l5.300 5.300M6.500 1.500v14" fill="none" stroke="#6e6e6e" stroke-width="1.800"/></svg><div class="b" style="left:262px;top:188px;width:530px;height:26px;border:1px solid #d9d9d9;box-sizing:border-box"></div><div class="b" style="left:766px;top:188px;width:1px;height:26px;background:#d9d9d9"></div><svg class="b" style="left:267.0px;top:192px;" width="12.5" height="17.0" viewBox="0 0 12.500 17"><defs><linearGradient id="fg" x1="0" x2="1"><stop offset="0" stop-color="#efcf62"/><stop offset=".6" stop-color="#fbdb6e"/><stop offset="1" stop-color="#f7d870"/></linearGradient></defs><path d="M3.600 0H11v10h1v4.600H3.600z" fill="url(#fg)"/><path d="M0 .300L3.700 .100V14.500L2.700 16.600 .300 15.300z" fill="#fbe8a6"/><path d="M3.700 .100V14.500L2.700 16.600z" fill="#f3dc92"/></svg><svg class="b" style="left:294.5px;top:197.0px;" width="5.5" height="8" viewBox="0 0 5.5 8"><path d="M.7 .7L4.0 4.0L.7 7.3" fill="none" stroke="#6e6e6e" stroke-width="1.8"/></svg><span class="t" style="left:310px;top:190.98px;font-size:14.5px;line-height:20px;color:#222;letter-spacing:-0.654px;">This PC</span><svg class="b" style="left:368.5px;top:197.0px;" width="5.5" height="8" viewBox="0 0 5.5 8"><path d="M.7 .7L4.0 4.0L.7 7.3" fill="none" stroke="#6e6e6e" stroke-width="1.8"/></svg><span class="t" style="left:384px;top:190.30px;font-size:15px;line-height:21px;color:#222;letter-spacing:-0.398px;">Pictures</span><svg class="b" style="left:446.5px;top:197.0px;" width="5.5" height="8" viewBox="0 0 5.5 8"><path d="M.7 .7L4.0 4.0L.7 7.3" fill="none" stroke="#6e6e6e" stroke-width="1.8"/></svg><div class="b" style="left:458px;top:189px;width:85px;height:24px;background:#e5f3ff;border:1px solid #cce8ff;box-sizing:border-box"></div><div class="b" style="left:543px;top:189px;width:18px;height:24px;background:#e5f3ff;border:1px solid #cce8ff;border-left:none;box-sizing:border-box"></div><span class="t" style="left:462px;top:190.30px;font-size:15px;line-height:21px;color:#222;letter-spacing:0.195px;">bot chomre</span><svg class="b" style="left:549.5px;top:197.0px;" width="5.5" height="8" viewBox="0 0 5.5 8"><path d="M.7 .7L4.0 4.0L.7 7.3" fill="none" stroke="#6e6e6e" stroke-width="1.8"/></svg><svg class="b" style="left:750.0px;top:199.0px;" width="10" height="6.5" viewBox="0 0 10 6.5"><path d="M.7 .7L5.0 5.0L9.3 .7" fill="none" stroke="#6e6e6e" stroke-width="1.6"/></svg><svg class="b" style="left:772px;top:193.5px;" width="14" height="15" viewBox="0 0 14 15"><path d="M10.800 3.200A5.600 5.600 0 1 1 4.200 2.600" fill="none" stroke="#6e6e6e" stroke-width="1.700"/><path d="M1.800 1.200h3.600v3.600" fill="none" stroke="#6e6e6e" stroke-width="1.700"/></svg><div class="b" style="left:804px;top:187px;width:253px;height:28px;border:1px solid #d9d9d9;box-sizing:border-box"></div><span class="t" style="left:814px;top:191.30px;font-size:15px;line-height:21px;color:#6d6d6d;letter-spacing:-0.161px;">Search bot chomre</span><svg class="b" style="left:1031px;top:194px;" width="14" height="14" viewBox="0 0 14 14"><circle cx="9" cy="5" r="3.700" fill="none" stroke="#6e6e6e" stroke-width="1.500"/><path d="M6.300 7.700L1 13" stroke="#6e6e6e" stroke-width="1.800"/></svg><div class="b" style="left:128px;top:224px;width:941px;height:38px;background:#f3f5f9"></div><div class="b" style="left:128px;top:262px;width:941px;height:1px;background:#e6e9ed"></div><span class="t" style="left:150px;top:233.30px;font-size:15px;line-height:21px;color:#1e395b;letter-spacing:-0.359px;">Organize</span><svg class="b" style="left:215px;top:241px;" width="8" height="5" viewBox="0 0 8 5"><path d="M0 0h8L4 4.500z" fill="#1e395b"/></svg><span class="t" style="left:260px;top:233.30px;font-size:15px;line-height:21px;color:#1e395b;letter-spacing:0.230px;">New folder</span><svg class="b" style="left:953px;top:235px;" width="19" height="16" viewBox="0 0 19 16"><rect x=".5" y="0.5" width="4.500" height="4" fill="#fff" stroke="#b8b2a8"/><rect x="2" y="1.8" width="1.500" height="1.500" fill="#4a6a9a"/><path d="M7 2.5h4.500M13 2.5h4.500" stroke="#7f8a93"/><rect x=".5" y="5.5" width="4.500" height="4" fill="#fff" stroke="#b8b2a8"/><rect x="2" y="6.8" width="1.500" height="1.500" fill="#8a5a5a"/><path d="M7 7.5h4.500M13 7.5h4.500" stroke="#7f8a93"/><rect x=".5" y="10.5" width="4.500" height="4" fill="#fff" stroke="#b8b2a8"/><rect x="2" y="11.8" width="1.500" height="1.500" fill="#b03030"/><path d="M7 12.5h4.500M13 12.5h4.500" stroke="#7f8a93"/></svg><svg class="b" style="left:984.5px;top:241px;" width="8" height="5" viewBox="0 0 8 5"><path d="M0 0h8L4 4.500z" fill="#1e395b"/></svg><svg class="b" style="left:1030px;top:233px;" width="20" height="20" viewBox="0 0 20 20"><circle cx="10" cy="10" r="10" fill="#0a67c2"/><text x="10" y="15.6" text-anchor="middle" font-family="Liberation Sans" font-size="16.0" fill="#e8f4ff" stroke="#e8f4ff" stroke-width=".5">?</text></svg><div class="b" style="left:128px;top:603px;width:174px;height:29px;background:#d9d9d9"></div><svg class="b" style="left:171.0px;top:270px;" width="12.5" height="17.0" viewBox="0 0 12.500 17"><defs><linearGradient id="fg" x1="0" x2="1"><stop offset="0" stop-color="#efcf62"/><stop offset=".6" stop-color="#fbdb6e"/><stop offset="1" stop-color="#f7d870"/></linearGradient></defs><path d="M3.600 0H11v10h1v4.600H3.600z" fill="url(#fg)"/><path d="M0 .300L3.700 .100V14.500L2.700 16.600 .300 15.300z" fill="#fbe8a6"/><path d="M3.700 .100V14.500L2.700 16.600z" fill="#f3dc92"/></svg><span class="t" style="left:193px;top:268.30px;font-size:15px;line-height:21px;color:#000;letter-spacing:-0.250px;">อัพแล้วห้ามลงอีก</span><svg class="b" style="left:158px;top:308px;" width="20" height="20" viewBox="0 0 20 20"><circle cx="10" cy="10" r="10" fill="#1e96e0"/><circle cx="10" cy="10" r="3.200" fill="none" stroke="#fff" stroke-width="1.500"/><circle cx="4.300" cy="10" r="1.700" fill="none" stroke="#fff" stroke-width="1.300"/><circle cx="15.700" cy="10" r="1.700" fill="none" stroke="#fff" stroke-width="1.300"/></svg><span class="t" style="left:183px;top:308.30px;font-size:15px;line-height:21px;color:#000;letter-spacing:0.144px;">Nextcloud</span><svg class="b" style="left:157.5px;top:351px;" width="20" height="13.2" viewBox="0 0 20 13.200"><defs><clipPath id="odc"><circle cx="4.600" cy="8.400" r="4.600"/><circle cx="10" cy="5.500" r="5.500"/><circle cx="15.600" cy="8.800" r="4.400"/><rect x="4" y="8" width="11.600" height="5.200"/></clipPath><linearGradient id="odg" x1="0" x2="1" y1="0" y2="0"><stop offset="0" stop-color="#0a47be"/><stop offset=".22" stop-color="#2478e6"/><stop offset=".45" stop-color="#3d9ff6"/><stop offset=".7" stop-color="#1f7de8"/></linearGradient><linearGradient id="odh" x1="0" x2="0" y1="0" y2="1"><stop offset="0" stop-color="#25c8fc"/><stop offset="1" stop-color="#14a4f2"/></linearGradient></defs><g clip-path="url(#odc)"><rect width="20" height="13.200" fill="url(#odg)"/><path d="M14.600 3.500L20 3.500V13.200H8.600z" fill="url(#odh)"/><path d="M5.200 0H16V5.500L13.700 5A6 6 0 0 0 5.200 3.500z" fill="#38a8f8" opacity=".55"/></g></svg><span class="t" style="left:183px;top:348.30px;font-size:15px;line-height:21px;color:#000;letter-spacing:-0.170px;">OneDrive</span><svg class="b" style="left:157.5px;top:391px;" width="20" height="13.2" viewBox="0 0 20 13.200"><defs><clipPath id="odc"><circle cx="4.600" cy="8.400" r="4.600"/><circle cx="10" cy="5.500" r="5.500"/><circle cx="15.600" cy="8.800" r="4.400"/><rect x="4" y="8" width="11.600" height="5.200"/></clipPath><linearGradient id="odg" x1="0" x2="1" y1="0" y2="0"><stop offset="0" stop-color="#0a47be"/><stop offset=".22" stop-color="#2478e6"/><stop offset=".45" stop-color="#3d9ff6"/><stop offset=".7" stop-color="#1f7de8"/></linearGradient><linearGradient id="odh" x1="0" x2="0" y1="0" y2="1"><stop offset="0" stop-color="#25c8fc"/><stop offset="1" stop-color="#14a4f2"/></linearGradient></defs><g clip-path="url(#odc)"><rect width="20" height="13.200" fill="url(#odg)"/><path d="M14.600 3.500L20 3.500V13.200H8.600z" fill="url(#odh)"/><path d="M5.200 0H16V5.500L13.700 5A6 6 0 0 0 5.200 3.500z" fill="#38a8f8" opacity=".55"/></g></svg><span class="t" style="left:183px;top:388.30px;font-size:15px;line-height:21px;color:#000;letter-spacing:-0.307px;">OneDrive - Person</span><svg class="b" style="left:159px;top:430px;" width="19" height="17" viewBox="0 0 19 17"><path d="M4.500 1l12 2.200v8.600l-12-1.600z" fill="#2e8fdc"/><path d="M5.500 2.200l10 1.800v6.600l-10-1.300z" fill="#6cc0f5"/><path d="M16.500 3.200l1 .6v8l-1 0z" fill="#7d8a96"/><path d="M8 11l4 .6v2l-4-.4z" fill="#9aa4ad"/><path d="M1 13.500l9-1.200 6 1.200-8 2.200z" fill="#c9ced3"/><path d="M1 13.500l7 2.200v.8l-7-2.200z" fill="#9aa4ad"/></svg><span class="t" style="left:183px;top:428.98px;font-size:14.5px;line-height:20px;color:#000;letter-spacing:-0.654px;">This PC</span><svg class="b" style="left:169px;top:459px;" width="18" height="18" viewBox="0 0 18 18"><path d="M9 0l8.500 3.500v10L9 18 .5 13.500v-10z" fill="#3cc4d8"/><path d="M9 0l8.500 3.500L9 7.500.5 3.500z" fill="#a8ecf3"/><path d="M9 7.500l8.500-4v10L9 18z" fill="#1a8fa8"/><path d="M.5 3.500l8.500 4V18L.5 13.500z" fill="#4fd0e0"/></svg><span class="t" style="left:193px;top:458.30px;font-size:15px;line-height:21px;color:#000;letter-spacing:-0.120px;">3D Objects</span><svg class="b" style="left:168px;top:492px;" width="19" height="14" viewBox="0 0 19 14"><rect x="0.5" y="0.5" width="18" height="12.5" fill="#1f93f3"/><rect x="0.5" y="10.5" width="18" height="2.5" fill="#58b4fb"/><rect x="2" y="11.3" width="1" height="1" fill="#fff"/><rect x="16" y="11.3" width="1" height="1" fill="#fff"/></svg><span class="t" style="left:193px;top:488.30px;font-size:15px;line-height:21px;color:#000;letter-spacing:-0.147px;">Desktop</span><svg class="b" style="left:171px;top:519px;" width="14" height="19" viewBox="0 0 14 19"><path d="M.5.5h9l4 4v13.5H.5z" fill="#fff" stroke="#8f9499"/><path d="M9.5.5v4h4" fill="#e8eaec" stroke="#8f9499"/><path d="M2.5 4.5h3M2.5 6.5h3" stroke="#3a7bd0"/><path d="M6.5 4.5h2" stroke="#7d8790"/><path d="M2.5 8.5h9M2.5 10.5h5M2.5 12.5h5M2.5 14.5h9" stroke="#7d8790"/><rect x="8.5" y="10" width="3" height="3" fill="#3a7bd0"/></svg><span class="t" style="left:193px;top:518.30px;font-size:15px;line-height:21px;color:#000;letter-spacing:0.014px;">Documents</span><svg class="b" style="left:170px;top:550px;" width="16" height="16" viewBox="0 0 16 16"><path d="M5 0h6v7.5h4.5L8 16 .5 7.5H5z" fill="#3b8fe3"/><path d="M5 0h6v2H5z" fill="#5aa7ee"/></svg><span class="t" style="left:193px;top:548.30px;font-size:15px;line-height:21px;color:#000;letter-spacing:-0.024px;">Downloads</span><svg class="b" style="left:172px;top:580px;" width="12" height="16" viewBox="0 0 12 16"><path d="M6 .5v11.2" stroke="#1e90e8" stroke-width="1.8" fill="none"/><ellipse cx="3.8" cy="13" rx="3.2" ry="2.6" fill="#1e90e8"/><path d="M6 .5c.5 3 4.500 3.500 4.500 7.500 0 1.200-.5 2-1 2.800.2-3-1.800-4.500-3.500-5z" fill="#1e90e8"/></svg><span class="t" style="left:193px;top:578.30px;font-size:15px;line-height:21px;color:#000;letter-spacing:-0.234px;">Music</span><svg class="b" style="left:169px;top:611px;" width="18" height="14" viewBox="0 0 18 14"><defs><linearGradient id="psk" x1="0" x2="0" y1="0" y2="1"><stop offset="0" stop-color="#6a9ae0"/><stop offset=".2" stop-color="#7fb0f2"/><stop offset=".55" stop-color="#d2e9f8"/><stop offset="1" stop-color="#cfe6f5"/></linearGradient><linearGradient id="phl" x1="0" x2="1" y1="0" y2="0"><stop offset="0" stop-color="#2f5a4c"/><stop offset=".5" stop-color="#47776e"/><stop offset="1" stop-color="#6f9aa0"/></linearGradient></defs><rect x=".5" y=".5" width="17" height="13" fill="#fff" stroke="#a3a3a3"/><rect x="2" y="2" width="14" height="10" fill="url(#psk)"/><path d="M2 6.300c2-.6 3.500-.6 5 .6 2 1.500 5 1.400 9 2.600V10.500H2z" fill="url(#phl)"/><path d="M2 9.800h14V12H2z" fill="#5f86b8"/><path d="M6.500 10.300h9.500v.8H6.500z" fill="#cfe2f2" opacity=".8"/></svg><span class="t" style="left:193px;top:608.30px;font-size:15px;line-height:21px;color:#000;letter-spacing:-0.398px;">Pictures</span><div class="b" style="left:303px;top:263px;width:20px;height:369px;background:#f0f0f0"></div><div class="b" style="left:303px;top:397px;width:20px;height:141px;background:#cdcdcd"></div><svg class="b" style="left:307.75px;top:271.125px;" width="9.5" height="6.25" viewBox="0 0 9.5 6.25"><path d="M.7 5.05L4.75 1L8.8 5.05" fill="none" stroke="#484848" stroke-width="2"/></svg><svg class="b" style="left:307.75px;top:618.525px;" width="9.5" height="6.25" viewBox="0 0 9.5 6.25"><path d="M.7 .7L4.75 4.75L8.8 .7" fill="none" stroke="#484848" stroke-width="2"/></svg><div class="b" style="left:323px;top:263px;width:5px;height:369px;background:#fff"></div><svg class="b" style="left:499.5px;top:263.25px;" width="9" height="6.0" viewBox="0 0 9 6.0"><path d="M.7 4.8L4.5 1L8.3 4.8" fill="none" stroke="#8a8a8a" stroke-width="1"/></svg><span class="t" style="left:349px;top:269.30px;font-size:15px;line-height:21px;color:#4c607a;">Name</span><span class="t" style="left:675px;top:269.30px;font-size:15px;line-height:21px;color:#4c607a;letter-spacing:0.264px;">Date modified</span><span class="t" style="left:825px;top:269.30px;font-size:15px;line-height:21px;color:#4c607a;letter-spacing:-0.633px;">Type</span><span class="t" style="left:975px;top:269.30px;font-size:15px;line-height:21px;color:#4c607a;letter-spacing:-0.547px;">Size</span><div class="b" style="left:667px;top:263px;width:1px;height:32px;background:#e8e8e8"></div><div class="b" style="left:817px;top:263px;width:1px;height:32px;background:#e8e8e8"></div><div class="b" style="left:967px;top:263px;width:1px;height:32px;background:#e8e8e8"></div><div class="b" style="left:1066px;top:263px;width:1px;height:32px;background:#e8e8e8"></div><div class="b" style="left:346px;top:303px;width:717px;height:28px;background:#cce8ff;border:1px solid #99d1ff;box-sizing:border-box"></div><svg class="b" style="left:353.0px;top:309px;" width="12.5" height="17.0" viewBox="0 0 12.500 17"><defs><linearGradient id="fg" x1="0" x2="1"><stop offset="0" stop-color="#efcf62"/><stop offset=".6" stop-color="#fbdb6e"/><stop offset="1" stop-color="#f7d870"/></linearGradient></defs><path d="M3.600 0H11v10h1v4.600H3.600z" fill="url(#fg)"/><path d="M0 .300L3.700 .100V14.500L2.700 16.600 .300 15.300z" fill="#fbe8a6"/><path d="M3.700 .100V14.500L2.700 16.600z" fill="#f3dc92"/></svg><span class="t" style="left:376px;top:307.30px;font-size:15px;line-height:21px;color:#000;letter-spacing:-0.650px;">Grok1_9</span><span class="t" style="left:675px;top:307.30px;font-size:15px;line-height:21px;color:#6d6d6d;letter-spacing:-0.055px;">2/23/2026 5:29 AM</span><span class="t" style="left:825px;top:307.30px;font-size:15px;line-height:21px;color:#6d6d6d;letter-spacing:0.104px;">File folder</span><div class="b" style="left:328px;top:612px;width:741px;height:20px;background:#f0f0f0"></div><div class="b" style="left:349px;top:612px;width:688px;height:19px;background:#cdcdcd"></div><svg class="b" style="left:334.725px;top:616.65px;" width="6.25" height="9.5" viewBox="0 0 6.25 9.5"><path d="M5.05 .7L1 4.75L5.05 8.8" fill="none" stroke="#484848" stroke-width="2"/></svg><svg class="b" style="left:1055.525px;top:616.65px;" width="6.25" height="9.5" viewBox="0 0 6.25 9.5"><path d="M.7 .7L4.75 4.75L.7 8.8" fill="none" stroke="#484848" stroke-width="2"/></svg><div class="b" style="left:128px;top:632px;width:941px;height:101px;background:#f0f0f0"></div><span class="t" style="left:276px;top:653.30px;font-size:15px;line-height:21px;color:#000;letter-spacing:-0.241px;">Folder:</span><div class="b" style="left:327px;top:648px;width:722px;height:30px;background:#fff;border:1px solid #7a7a7a;box-sizing:border-box"></div><span class="t" style="left:334px;top:651.30px;font-size:15px;line-height:21px;color:#000;letter-spacing:-0.650px;">Grok1_9</span><div class="b" style="left:791px;top:686px;width:132px;height:31px;background:#e1e1e1;border:2px solid #0078d7;box-sizing:border-box"></div><span class="t" style="left:814px;top:691.30px;font-size:15px;line-height:21px;color:#000;letter-spacing:-0.183px;">Select Folder</span><div class="b" style="left:940px;top:686px;width:108px;height:31px;background:#e1e1e1;border:1px solid #adadad;box-sizing:border-box"></div><span class="t" style="left:972px;top:691.30px;font-size:15px;line-height:21px;color:#000;letter-spacing:-0.451px;">Cancel</span><svg class="b" style="left:1056px;top:721px;" width="11" height="11" viewBox="0 0 11 11"><rect x="8" y="0" width="2" height="2" fill="#b8b8b8"/><rect x="8" y="3" width="2" height="2" fill="#b8b8b8"/><rect x="5" y="3" width="2" height="2" fill="#b8b8b8"/><rect x="8" y="6" width="2" height="2" fill="#b8b8b8"/><rect x="5" y="6" width="2" height="2" fill="#b8b8b8"/><rect x="2" y="6" width="2" height="2" fill="#b8b8b8"/><rect x="8" y="9" width="2" height="2" fill="#b8b8b8"/><rect x="5" y="9" width="2" height="2" fill="#b8b8b8"/><rect x="2" y="9" width="2" height="2" fill="#b8b8b8"/></svg><div class="b" style="left:127px;top:142px;width:943px;height:592px;border:1px solid #5a5a5a;box-sizing:border-box"></div><svg class="b" style="left:510px;top:200px;" width="13" height="20" viewBox="0 0 13 20"><path d="M.7.7v15.300l3.600-3.400 2.400 5.700 2.200-.9-2.400-5.600h5z" fill="#fff" stroke="#000" stroke-width="1"/></svg></div><div class="layer"><div class="b" style="left:1881px;top:132px;width:39px;height:78px;background:#767d9a;border-radius:4px 0 0 4px;box-shadow:0 0 6px rgba(90,96,130,.35)"></div><svg class="b" style="left:1895px;top:142px;" width="17" height="19" viewBox="0 0 17 19"><path d="M8.500.5l7 2v7.500c0 4-3 6.500-7 8.500-4-2-7-4.500-7-8.500V2.500z" fill="#35c48d"/><path d="M4.500 9.500l3 3 5.500-6.500" fill="none" stroke="#17624a" stroke-width="2"/></svg><div class="b" style="left:1887px;top:166px;width:33px;height:1px;background:#8188a4"></div><span class="t" style="left:1889px;top:168.30px;font-size:15px;line-height:21px;color:#f0f1f7;font-weight:700;letter-spacing:0.656px;">28</span><span class="t" style="left:1909px;top:173.53px;font-size:10px;line-height:14px;color:#d5d8e6;font-weight:700;">%</span><div class="b" style="left:1885px;top:193px;width:35px;height:7px;background:#d0d4d8;border-radius:3.500px"></div><div class="b" style="left:1885px;top:193px;width:14px;height:7px;background:linear-gradient(90deg,#7fd6ae,#35c48d);border-radius:3.500px"></div></div><div class="layer"><div class="b" style="left:0px;top:1030px;width:1920px;height:50px;background:#02050a"></div><svg class="b" style="left:20px;top:1045px;" width="20" height="20" viewBox="0 0 20 20"><path d="M0 2.800L8.200 1.700v7.900H0zM9.200 1.500L20 0v9.600H9.200zM0 10.500h8.200v7.900L0 17.300zM9.200 10.500H20V20L9.200 18.500z" fill="#fff"/></svg><svg class="b" style="left:79px;top:1044px;" width="22" height="22" viewBox="0 0 22 22"><circle cx="13.500" cy="8" r="6.500" fill="none" stroke="#fff" stroke-width="1.400"/><path d="M9 13L1 21" stroke="#fff" stroke-width="1.500"/></svg><svg class="b" style="left:139px;top:1044px;" width="22" height="21" viewBox="0 0 22 21"><path d="M1.500 1v3.500h13V1M1.500 7.200h13v6.800h-13zM1.500 20v-3.500h13V20M19.500 1V7M19.500 10.500V20" fill="none" stroke="#fff" stroke-width="1.200"/><rect x="18" y="7" width="3" height="3.500" fill="#fff"/></svg><svg class="b" style="left:200px;top:1043px;" width="28" height="23" viewBox="0 0 28 23"><path d="M0 1h9l2 2.500h17V23H0z" fill="#f3c64c"/><path d="M1.500 2.200h6v1.300h-6z" fill="#fff6d5"/><path d="M0 6h28v17H0z" fill="#fbe18c"/><path d="M5 12h17v11h-4v-6h-9v6H5z" fill="#38a0e6"/><path d="M5 12h17v2.500H5z" fill="#62bdf6"/></svg><div class="b" style="left:246px;top:1030px;width:61px;height:48px;background:#313437"></div><svg class="b" style="left:261px;top:1040px;overflow:visible;" width="30" height="30" viewBox="0 0 24 24"><circle cx="12" cy="12" r="11" fill="#fff"/><path d="M2.040 6.250A11.500 11.500 0 0 1 21.960 6.250H12a5.750 5.750 0 0 0-4.980 8.625z" fill="#e33b2e"/><path d="M2.040 6.250A11.500 11.500 0 0 1 21.960 6.250H12a5.750 5.750 0 0 0-4.980 8.625z" fill="#fbc116" transform="rotate(120 12 12)"/><path d="M2.040 6.250A11.500 11.500 0 0 1 21.960 6.250H12a5.750 5.750 0 0 0-4.980 8.625z" fill="#2ea14c" transform="rotate(240 12 12)"/><circle cx="12" cy="12" r="5.300" fill="#fff"/><circle cx="12" cy="12" r="4.300" fill="#3d7fe8"/><g transform="translate(18 18) scale(1.200)"><circle cx="0" cy="0" r="6" fill="#d3e0fa" stroke="#3f6fd8" stroke-width="1.500"/><circle cx="0" cy="-1.500" r="1.900" fill="none" stroke="#3466d6" stroke-width="1.300"/><path d="M-3.700 3.100c1-1.800 6.400-1.800 7.400 0" fill="none" stroke="#3466d6" stroke-width="1.300"/></g></svg><svg class="b" style="left:323px;top:1043px;" width="29" height="23" viewBox="0 0 29 23"><rect x=".500" y=".500" width="27.500" height="21.500" fill="#050505" stroke="#a0a0a0"/><rect x="1" y="1" width="26.500" height="1.800" fill="#8a8a8a"/><path d="M3 4.500h1.500v1.500H3zM5.500 4.500l2.500 2M8 6.500h5" stroke="#d8d8d8" fill="none" stroke-width=".900"/></svg><svg class="b" style="left:388px;top:1043px;" width="23" height="23" viewBox="0 0 23 23"><g transform="translate(11.500 11.500)"><rect x="-2.300" y="-11.500" width="4.600" height="6" fill="#fff" transform="rotate(0)"/><rect x="-2.300" y="-11.500" width="4.600" height="6" fill="#fff" transform="rotate(45)"/><rect x="-2.300" y="-11.500" width="4.600" height="6" fill="#fff" transform="rotate(90)"/><rect x="-2.300" y="-11.500" width="4.600" height="6" fill="#fff" transform="rotate(135)"/><rect x="-2.300" y="-11.500" width="4.600" height="6" fill="#fff" transform="rotate(180)"/><rect x="-2.300" y="-11.500" width="4.600" height="6" fill="#fff" transform="rotate(225)"/><rect x="-2.300" y="-11.500" width="4.600" height="6" fill="#fff" transform="rotate(270)"/><rect x="-2.300" y="-11.500" width="4.600" height="6" fill="#fff" transform="rotate(315)"/><circle r="8" fill="#fff"/><circle r="4.200" fill="#02050a"/></g></svg><svg class="b" style="left:447px;top:1042px;" width="28" height="26" viewBox="0 0 28 26"><path d="M9 2l15 2-4 20L3 21z" fill="#bfe3ee"/><path d="M9 2l15 2-1 3L8 5z" fill="#e9f6fa"/><path d="M3 21l17 3 1-3-17-2z" fill="#7fb8c8"/><path d="M20 24l4-20 2 1-4 19z" fill="#e8d9a0"/></svg><svg class="b" style="left:1642.0px;top:1049.8px;" width="16" height="9.5" viewBox="0 0 16 9.5"><path d="M.7 8.3L8.0 1L15.3 8.3" fill="none" stroke="#fff" stroke-width="1.3"/></svg><svg class="b" style="left:1670px;top:1046px;" width="21" height="18" viewBox="0 0 21 18"><path d="M1.100 1.600h18.400v12.400H3" fill="none" stroke="#fff" stroke-width="1.200"/><path d="M1.100 1.600h3.500v5.400H1.100z" fill="none" stroke="#fff" stroke-width="1.100"/><path d="M2.600 2.800v2" stroke="#fff" stroke-width="1"/><path d="M2.600 7v10M10.500 14v2.600M7 16.600h7" fill="none" stroke="#fff" stroke-width="1.200"/></svg><svg class="b" style="left:1699px;top:1045px;" width="22" height="20" viewBox="0 0 22 20"><path d="M1.200 7.200h3.300l3.800-3.800v13.200l-3.800-3.800H1.200z" fill="none" stroke="#fff" stroke-width="1.200"/><path d="M11 8a2.800 2.800 0 0 1 0 4M13.300 5.300a6.600 6.600 0 0 1 0 9.400M15.800 1.800a11.500 11.500 0 0 1 0 16.400" fill="none" stroke="#fff" stroke-width="1.200"/></svg><span class="t" style="left:1733px;top:1045.30px;font-size:15px;line-height:21px;color:#fff;letter-spacing:-1.172px;">ENG</span><span class="t" style="left:1785px;top:1033.30px;font-size:15px;line-height:21px;color:#fff;letter-spacing:-0.150px;">5:33 AM</span><span class="t" style="left:1778px;top:1056.30px;font-size:15px;line-height:21px;color:#fff;letter-spacing:0.141px;">2/23/2026</span><svg class="b" style="left:1869px;top:1045px;" width="20" height="21" viewBox="0 0 20 21"><path d="M0 0h20v16.600H10v4l-4-4H0z" fill="#fff"/><path d="M4 4.500h12M4 7.800h12M4 11.100h12" stroke="#02050a" stroke-width="1.300"/></svg><div class="b" style="left:1878px;top:1054px;width:21px;height:21px;background:#26282b;border:1px solid #8a8d90;border-radius:11px;box-sizing:border-box"></div><span class="t" style="left:1884px;top:1054.30px;font-size:15px;line-height:21px;color:#fff;font-weight:700;">2</span><div class="b" style="left:1914px;top:1030px;width:1px;height:48px;background:#6a6a6a"></div></div><div class="layer"><div class="b" style="left:0px;top:0px;width:1920px;height:3px;background:linear-gradient(#fdfcae,#f7ee84)"></div><div class="b" style="left:2px;top:3px;width:1916px;height:1px;background:#5a4d00"></div><div class="b" style="left:0px;top:2px;width:2px;height:1028px;background:#fce33c"></div><div class="b" style="left:0px;top:1030px;width:2px;height:50px;background:#c9ad16"></div><div class="b" style="left:2px;top:3px;width:1px;height:1027px;background:#5a4d00"></div><div class="b" style="left:1918px;top:2px;width:2px;height:1028px;background:#f8e43c"></div><div class="b" style="left:1918px;top:1030px;width:2px;height:50px;background:#c4a818"></div><div class="b" style="left:1917px;top:3px;width:1px;height:1027px;background:#5a4d00"></div><div class="b" style="left:0px;top:1078px;width:1920px;height:2px;background:#c8ac1c"></div></div></body></html>
